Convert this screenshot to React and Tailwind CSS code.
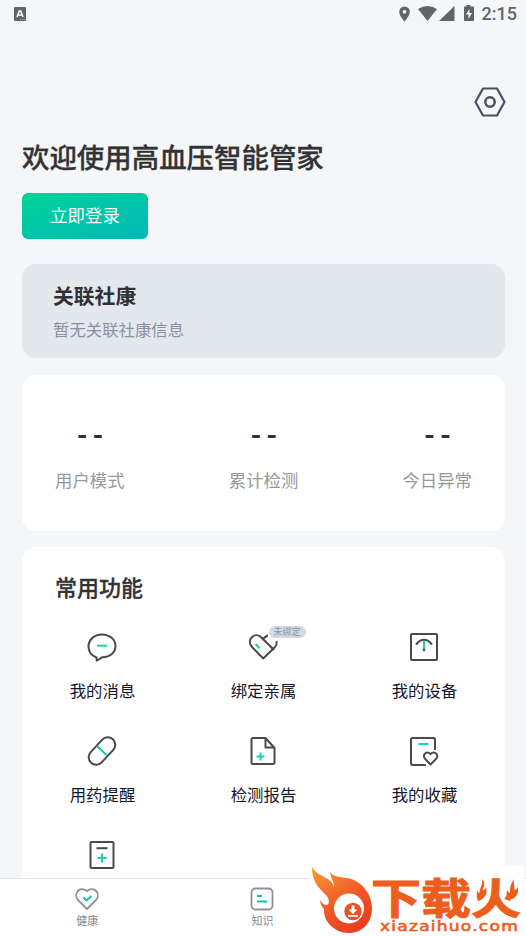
import React from 'react';

const DARK = '#4a4a4c';
const TEAL = '#19d0b0';

const StatusBar = () => (
  <div className="h-7 flex items-center justify-between pl-[14px] pr-[9px] text-[#636466]">
    <svg width="12" height="14" viewBox="0 0 12 14">
      <rect width="12" height="14" rx="1" fill="#636466" />
      <path d="M3 10 5.3 4h1.4L9 10M4 8h4" stroke="#fff" strokeWidth="1.5" fill="none" />
      <path d="M6 12.5h5" stroke="#aaa" strokeDasharray="1 1" />
    </svg>
    <div className="flex items-center">
      <svg width="84" height="18" viewBox="0 0 84 18" fill="#636466">
        <path fillRule="evenodd" d="M6.500 1.500a5.300 5.300 0 0 0-5.300 5.300c0 4 5.300 9.900 5.300 9.900s5.300-5.900 5.300-9.900a5.300 5.300 0 0 0-5.300-5.300Zm0 3.400a1.900 1.900 0 1 1 0 3.800 1.900 1.900 0 0 1 0-3.800Z" />
        <path d="M20 4Q29.500 -2 39 4L29.500 16Z" />
        <path d="M56.500 1v15H41Z" />
        <path fillRule="evenodd" d="M68.500 0h4v1.500H75c.6 0 1 .4 1 1V15c0 .6-.4 1-1 1h-8c-.6 0-1-.4-1-1V2.500c0-.6.400-1 1-1h1.500Zm3 4L68 9.500h2.500V14L74 8h-2.500Z" />
      </svg>
      <span className="font-[Roboto] font-medium text-[18px] leading-none">2:15</span>
    </div>
  </div>
);

const icons = {
  message: (
    <>
      <path d="M10.500 26.500C5.500 24.500 2.500 20.500 2.500 15.500 2.500 8.500 8.500 3.500 16 3.500s13.500 5 13.500 11.500S24 26.300 16.500 26.300c-1.700.6-3.500 2.400-5.800 3.300Z" />
      <path d="M11 14.700h10" stroke={TEAL} />
    </>
  ),
  family: (
    <>
      <path d="M17 9 14.500 6.500C11.500 3.500 7.500 3.500 4.800 6.200s-2.700 6.800.2 9.800L16.200 27.500 28.500 15.500" />
      <path d="M14.500 6.500 27 19M16.500 7.500c1.500-1.500 2.500-2.500 4.500-3M28.500 15.500c1.200-1.500 1.500-3.500 1-5.500" />
      <path d="m8.500 13 4 4.200" stroke={TEAL} />
    </>
  ),
  device: (
    <>
      <rect x="3" y="3" width="26" height="26" rx="1" />
      <path d="M16 10v8" stroke={TEAL} />
      <path d="M8 13.500q8-9.500 16 0" />
      <circle cx="16" cy="19" r="1" fill={DARK} strokeWidth="1" />
    </>
  ),
  pill: (
    <>
      <rect x="8.500" y="0" width="15" height="32" rx="7.500" transform="rotate(43 16 16)" />
      <path d="m11 11 10 9.500" stroke={TEAL} />
    </>
  ),
  report: (
    <>
      <path d="M17.500 3H6Q4.500 3 4.500 4.500v23Q4.500 29 6 29h20q1.500 0 1.500-1.500V13l-9-10Z" />
      <path d="M18.500 3.500V12.500H27" />
      <path d="M13.500 17.500v8M9.500 21.500h8" stroke={TEAL} />
    </>
  ),
  favorite: (
    <>
      <path d="M27 15V4.500Q27 3 25.500 3h-21Q3 3 3 4.500v23Q3 30 4.500 30H18" />
      <path d="M10.500 9h10" stroke={TEAL} />
      <path d="M22.500 29.500 17 23.700c-3.500-4 2-8.500 5.500-4.500 3.500-4 9.300.5 5.700 4.500Z" />
    </>
  ),
  record: (
    <>
      <rect x="4.500" y="3" width="23" height="26" rx="1" />
      <path d="M10.500 9.200h11" />
      <path d="M16 14.500v9M11.500 19h9" stroke={TEAL} />
    </>
  ),
};

const features = [
  { icon: 'message', label: '我的消息' },
  { icon: 'family', label: '绑定亲属', badge: '未绑定' },
  { icon: 'device', label: '我的设备' },
  { icon: 'pill', label: '用药提醒' },
  { icon: 'report', label: '检测报告' },
  { icon: 'favorite', label: '我的收藏' },
  { icon: 'record', label: '' },
];

const Feature = ({ icon, label, badge }) => (
  <div className="h-[104px] flex flex-col items-center">
    <div className="relative mr-[2px]">
      <svg width="32" height="32" viewBox="0 0 32 32" fill="none" stroke={DARK} strokeWidth="2" strokeLinejoin="round" className="block">
        {icons[icon]}
      </svg>
      {badge && (
        <span className="absolute left-[22px] -top-[5px] w-[37px] h-[12px] rounded-full bg-[#d3dae1] text-[#8b94a5] text-[9px] leading-[12px] text-center whitespace-nowrap">
          {badge}
        </span>
      )}
    </div>
    <span className="mt-[15px] text-[16.400px] leading-6 text-[#14172a]">{label}</span>
  </div>
);

const BottomNav = () => (
  <nav className="h-[58px] shrink-0 bg-white border-t border-[#e4e7f0] grid grid-cols-3 text-[11px] leading-4 text-[#85898d]">
    <div className="flex flex-col items-center pt-[7px] pr-[1px]">
      <svg width="26" height="26" viewBox="0 0 26 26" fill="none" stroke="#8d9295" strokeWidth="1.800" strokeLinejoin="round">
        <path d="M13 23 4 14C-1.500 7.500 6-.500 13 5c7-5.500 14.500 2.500 9 9Z" />
        <path d="m9.500 11.500 3 3 5-4.500" stroke="#10c4b8" strokeWidth="2" />
      </svg>
      <span>健康</span>
    </div>
    <div className="flex flex-col items-center pt-[7px] pr-[1px]">
      <svg width="26" height="26" viewBox="0 0 26 26" fill="none" stroke="#8d9295" strokeWidth="1.800">
        <rect x="2.500" y="2.500" width="21" height="21" rx="4" />
        <path d="M8 10h5M8 15.500h10" stroke="#10c4b8" strokeWidth="2" />
      </svg>
      <span>知识</span>
    </div>
  </nav>
);

const SiteLogo = () => (
  <svg className="absolute left-[309px] top-[866px]" width="215" height="70" viewBox="309 866 215 70">
    <defs>
      <linearGradient id="fire" x1="0" y1="0" x2="0.600" y2="1">
        <stop offset="0" stopColor="#f99b35" />
        <stop offset="0.600" stopColor="#f15a28" />
        <stop offset="1" stopColor="#e83f20" />
      </linearGradient>
    </defs>
    <rect x="309" y="866" width="215" height="70" fill="#fff" />
    <path fill="url(#fire)" d="M312 867c3 6 9 8 14 11 5 3 7 5 7.500 9 1.500-5-3-8-3.500-15 4 5 10 5 16 6 14 1 26 15 26 30 0 15-10 25-23 25-15 0-26-12-25-24-2-2-4-5-4-9 2 4 5 5.500 7.500 5 2.500-2 1.500-7-2-10.500-6-6-14-13-13.500-27.500Z" />
    <circle cx="349" cy="908.500" r="15" fill="#fff" />
    <circle cx="353" cy="911.500" r="8.700" fill="#ed4e26" />
    <path fill="#fff" d="M351.500 905.500h3v4h3l-4.500 4.500-4.500-4.500h3ZM348 915h10v1.700h-10Z" />
    <text
      x="371"
      y="0"
      fontSize="50"
      fontWeight="700"
      fill="#ec5e1c"
      stroke="#ec5e1c"
      strokeWidth="1.200"
      transform="translate(0 913.500) scale(1 .84)"
      className="font-['Noto_Sans_CJK_SC',sans-serif]"
    >
      下载火
    </text>
    {/* side strokes of 火 are small flames */}
    <path fill="#fff" d="M472 878h15v18l-4 6h-11ZM504 878h18v22l-11 1-7-8Z" />
    <path fill="#ec5e1c" d="M482 879c4 4 2 8 .5 11 2 0 3-1 3.500-3 2 6-1 12-8 14-1-3-2-6-.5-11 .5 2 1 3 2 3 0-5 3.500-8 2.500-14ZM514 879c-1 4 1 7 .5 11 1.500 0 2.500-1 3-3 2 6-1 11-8 13-3-2-4-6-2-10 .5 2 1.500 3 2.500 3-.5-5 1-10 4-14Z" />
    <text
      x="380"
      y="931"
      fontSize="14"
      fill="#ec5e1c"
      stroke="#ec5e1c"
      strokeWidth="0.600"
      textLength="139"
      lengthAdjust="spacingAndGlyphs"
      className="font-['DejaVu_Sans',sans-serif] tracking-[1px]"
    >
      xiazaihuo.com
    </text>
  </svg>
);

export default function App() {
  return (
    <div className="relative w-[526px] h-[936px] overflow-hidden flex flex-col bg-[#f4f6f8] font-['Noto_Sans_CJK_SC',sans-serif]">
      <StatusBar />

      <main className="flex-1 min-h-0 overflow-hidden flex flex-col pl-[22px] pr-[21px]">
        {/* Settings */}
        <div className="flex justify-end pt-[58px] -mr-[1px]">
          <svg width="32" height="32" viewBox="0 0 32 32" fill="none" stroke="#4b5068" strokeWidth="2.200" strokeLinejoin="round">
            <path d="M9 2.500h14L30.500 16 23 29.500H9L1.500 16Z" />
            <circle cx="16" cy="16" r="4.700" strokeWidth="2.500" />
          </svg>
        </div>

        <h1 className="mt-[18px] text-[27.450px] leading-10 font-medium text-[#323335] [-webkit-text-stroke:0.300px]">欢迎使用高血压智能管家</h1>
        <button className="mt-[17px] w-[126px] h-[46px] shrink-0 rounded-md bg-linear-to-br from-[#00d498] to-[#00b8b6] text-white text-[17.400px] pb-[1px]">
          立即登录
        </button>

        {/* Linked clinic */}
        <section className="mt-[25px] h-[94px] shrink-0 rounded-[14px] bg-[#e3e8ec] px-[31px] pt-[17px]">
          <h2 className="text-[20.800px] leading-7 font-bold text-[#303134]">关联社康</h2>
          <p className="mt-2 text-[16.400px] leading-6 text-[#8b91a3]">暂无关联社康信息</p>
        </section>

        {/* Stats */}
        <section className="mt-[17px] h-[156px] shrink-0 rounded-[14px] bg-white px-[33px] pt-[38px] flex justify-between text-center">
          {['用户模式', '累计检测', '今日异常'].map((label) => (
            <div key={label}>
              <div className="text-[28px] leading-10 font-bold text-[#303134] tracking-[5.500px] pl-[6px]">--</div>
              <div className="mt-[15px] text-[17.400px] leading-6 text-[#999]">{label}</div>
            </div>
          ))}
        </section>

        {/* Common features */}
        <section className="mt-4 h-[420px] shrink-0 rounded-t-[14px] bg-white pt-[23px]">
          <h2 className="pl-[33px] text-[22px] leading-8 font-medium text-[#323335] [-webkit-text-stroke:0.300px]">常用功能</h2>
          <div className="mt-[29px] grid grid-cols-3">
            {features.map((item) => (
              <Feature key={item.icon} {...item} />
            ))}
          </div>
        </section>
      </main>

      <BottomNav />
      <SiteLogo />
    </div>
  );
}
